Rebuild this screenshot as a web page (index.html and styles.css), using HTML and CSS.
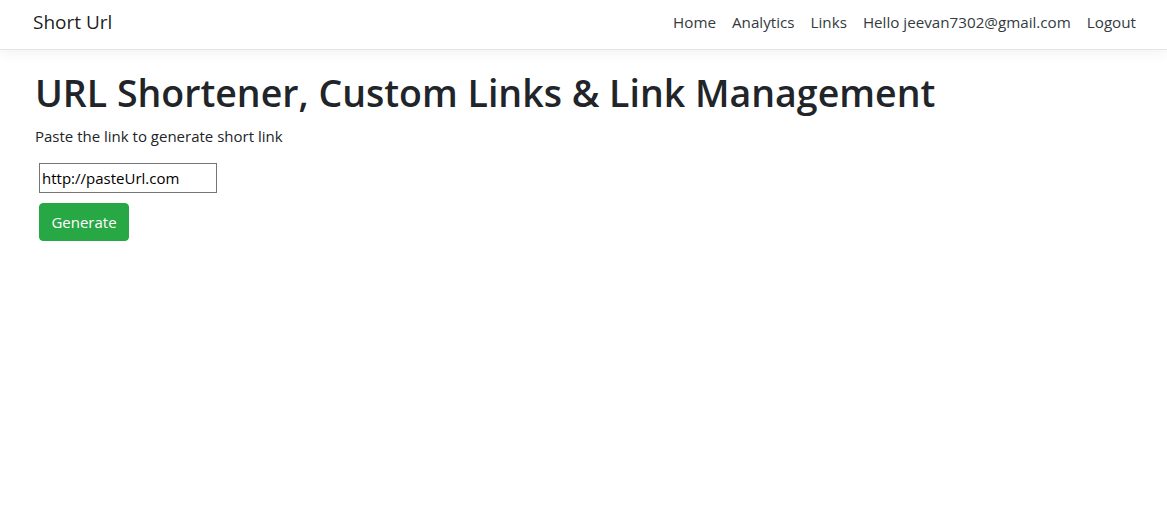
FILE: index.html
```html
<!DOCTYPE html>
<html>
<head>
<meta charset="utf-8">
<link rel="stylesheet" href="styles.css">
</head>
<body>
<header class="navbar">
  <a class="brand" href="#">Short Url</a>
  <nav class="nav">
    <a class="nav-link" href="#">Home</a>
    <a class="nav-link" href="#">Analytics</a>
    <a class="nav-link" href="#">Links</a>
    <span class="nav-link">Hello jeevan7302@gmail.com</span>
    <a class="nav-link" href="#">Logout</a>
  </nav>
</header>
<main class="main">
  <h1 class="title">URL Shortener, Custom Links &amp; Link Management</h1>
  <p class="lead">Paste the link to generate short link</p>
  <form class="form">
    <input class="url-input" type="text" value="http://pasteUrl.com">
    <button class="btn-generate" type="button">Generate</button>
  </form>
</main>
</body>
</html>
```
FILE: styles.css
```css
html, body {
  margin: 0;
  padding: 0;
  background: #fff;
}
body {
  font-family: "Open Sans", "Noto Sans", sans-serif;
  color: #212529;
  font-size: 16px;
}
.navbar {
  height: 50px;
  box-sizing: border-box;
  border-bottom: 1px solid #e5e5e5;
  box-shadow: 0 0.25rem 0.75rem rgba(0, 0, 0, 0.05);
  display: flex;
  align-items: center;
  justify-content: space-between;
  padding: 0 23px 6px 33px;
}
.brand {
  font-size: 19px;
  color: rgba(0, 0, 0, 0.9);
  text-decoration: none;
}
.nav {
  display: flex;
}
.nav-link {
  font-size: 15.2px;
  color: #343a40;
  text-decoration: none;
  padding: 0 8px;
}
.main {
  padding: 0 35px;
}
.title {
  margin: 20px 0 0;
  font-size: 37.5px;
  font-weight: 600;
  line-height: 46px;
}
.lead {
  margin: 8px 0 0;
  font-size: 15px;
  line-height: 24px;
}
.form {
  display: flex;
  flex-direction: column;
  align-items: flex-start;
  gap: 10px;
  margin-top: 15px;
  padding-left: 4px;
}
.url-input {
  width: 178px;
  height: 30px;
  box-sizing: border-box;
  border: 1px solid #767676;
  border-radius: 0;
  padding: 1px 2px;
  font-family: "Open Sans", sans-serif;
  font-size: 15px;
  color: #000;
}
.btn-generate {
  width: 90px;
  height: 38px;
  background: #28a745;
  border: 1px solid #28a745;
  border-radius: 4px;
  color: #fff;
  font-family: "Open Sans", sans-serif;
  font-size: 15px;
  padding: 0;
}
```
